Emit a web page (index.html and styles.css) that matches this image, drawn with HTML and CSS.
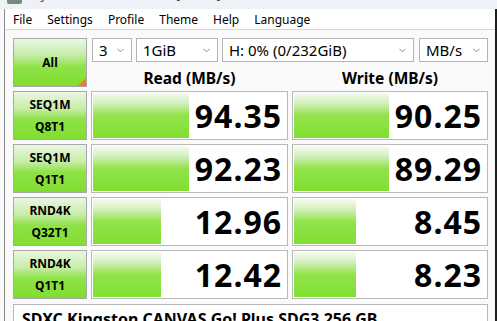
FILE: index.html
```html
<!DOCTYPE html>
<html lang="en">
<head>
    <meta charset="UTF-8">
    <title>CrystalDiskMark</title>
    <link rel="stylesheet" href="styles.css">
</head>
<body>
    <div class="titlebar">
        <span class="app-icon"></span>
        <span class="title-text">CrystalDiskMark 8.0.4 x64 [Admin]</span>
        <span class="title-ctrl">&mdash;</span>
        <span class="title-ctrl">&#9633;</span>
        <span class="title-ctrl">&#10005;</span>
    </div>
    <div class="window">
        <nav class="menubar">
            <span>File</span>
            <span>Settings</span>
            <span>Profile</span>
            <span>Theme</span>
            <span>Help</span>
            <span>Language</span>
        </nav>

        <main class="panel">
            <button class="all-btn">All</button>

            <div class="selects">
                <div class="select sel-count">3<svg class="chev" viewBox="0 0 8 5"><polyline points="0.5,0.5 4,4 7.5,0.5"/></svg></div>
                <div class="select sel-size">1GiB<svg class="chev" viewBox="0 0 8 5"><polyline points="0.5,0.5 4,4 7.5,0.5"/></svg></div>
                <div class="select sel-drive">H: 0% (0/232GiB)<svg class="chev" viewBox="0 0 8 5"><polyline points="0.5,0.5 4,4 7.5,0.5"/></svg></div>
                <div class="select sel-unit">MB/s<svg class="chev" viewBox="0 0 8 5"><polyline points="0.5,0.5 4,4 7.5,0.5"/></svg></div>
            </div>

            <div class="col-head">Read (MB/s)</div>
            <div class="col-head">Write (MB/s)</div>

            <div class="test-btn">SEQ1M<br>Q8T1</div>
            <div class="result"><div class="bar" style="width: 49%"></div><span class="value">94.35</span></div>
            <div class="result"><div class="bar" style="width: 49%"></div><span class="value">90.25</span></div>

            <div class="test-btn">SEQ1M<br>Q1T1</div>
            <div class="result"><div class="bar" style="width: 49%"></div><span class="value">92.23</span></div>
            <div class="result"><div class="bar" style="width: 49%"></div><span class="value">89.29</span></div>

            <div class="test-btn">RND4K<br>Q32T1</div>
            <div class="result"><div class="bar" style="width: 35%"></div><span class="value">12.96</span></div>
            <div class="result"><div class="bar" style="width: 32%"></div><span class="value">8.45</span></div>

            <div class="test-btn">RND4K<br>Q1T1</div>
            <div class="result"><div class="bar" style="width: 35%"></div><span class="value">12.42</span></div>
            <div class="result"><div class="bar" style="width: 32%"></div><span class="value">8.23</span></div>

            <div class="comment">SDXC Kingston CANVAS Go! Plus SDG3 256 GB</div>
        </main>
    </div>
</body>
</html>
```

FILE: styles.css
```css
body {
    margin: 0;
    height: 321px;
    font-family: 'Noto Sans', 'Open Sans', sans-serif;
    background: #fafafa;
    color: #000;
    overflow: hidden;
}

/* Заголовок вікна: у кадрі лише його низ */
.titlebar {
    height: 9px;
    background-color: #eef1f6;
    display: flex;
    align-items: flex-start;
    overflow: hidden;
    font-size: 12px;
    color: #444;
}

.app-icon {
    width: 15px;
    height: 4px;
    margin: 0 0 0 7px;
    background: #7b877b;
    border-radius: 0 0 2px 2px;
}

.title-text {
    margin: -12px 0 0 6px;
    line-height: 14px;
    flex: 1;
}

.title-ctrl {
    width: 46px;
    text-align: center;
    line-height: 14px;
    margin-top: -12px;
    color: #999;
}

.window {
    margin-left: 4px;
    border-left: 1px solid #8a8a8a;
    border-right: 2px solid #1e1e1e;
    height: 312px;
    overflow: hidden;
}

.menubar {
    height: 20px;
    background: #ffffff;
    border-bottom: 1px solid #d7d7d7;
    display: flex;
    align-items: center;
    font-size: 12px;
    padding-left: 8px;
}

.menubar span {
    margin-right: 15px;
}

.panel {
    display: grid;
    grid-template-columns: 74px 197px 196px;
    grid-template-rows: 24px 21px repeat(4, 49px) auto;
    column-gap: 4px;
    row-gap: 4px;
    padding: 8px 0 0 8px;
}

.all-btn {
    grid-row: 1 / 3;
    position: relative;
    border: 1px solid #a8a8a8;
    background: linear-gradient(to bottom, #eaf6e2 0%, #c4eca6 35%, #8ee246 60%, #7fdd2e 100%);
    font-family: inherit;
    font-weight: bold;
    font-size: 12px;
    padding: 0;
    margin: 0;
}

.all-btn::after {
    content: '';
    position: absolute;
    right: 0;
    bottom: 0;
    border-left: 8px solid transparent;
    border-bottom: 8px solid #ee7d1c;
}

.selects {
    grid-column: 2 / 4;
    display: flex;
    gap: 4px;
    margin-left: 1px;
}

.select {
    position: relative;
    height: 24px;
    box-sizing: border-box;
    border: 1px solid #b4b4b4;
    background: #ffffff;
    font-size: 15px;
    line-height: 22px;
    padding-left: 6px;
}

.sel-count { width: 40px; }
.sel-size { width: 82px; }
.sel-drive { width: 192px; }
.sel-unit { width: 69px; margin-left: 1px; }

.chev {
    position: absolute;
    right: 7px;
    top: 9px;
    width: 7px;
    height: 5px;
    fill: none;
    stroke: #7a7a7a;
    stroke-width: 1;
}

.col-head {
    font-weight: bold;
    font-size: 15.5px;
    text-align: center;
    line-height: 21px;
    margin-top: 2px;
}

.test-btn {
    border: 1px solid #a8a8a8;
    background: linear-gradient(to bottom, #eaf6e2 0%, #c8eda9 35%, #8ee246 58%, #80de30 100%);
    font-weight: bold;
    font-size: 12px;
    line-height: 22px;
    text-align: center;
    display: flex;
    align-items: center;
    justify-content: center;
}

.result {
    position: relative;
    border: 1px solid #b9b9b9;
    background: #ffffff;
    display: flex;
    align-items: center;
    justify-content: flex-end;
    overflow: hidden;
}

.bar {
    position: absolute;
    left: 1px;
    top: 1px;
    bottom: 1px;
    background: linear-gradient(to bottom, #f6fbf2 0%, #d4f0bf 22%, #92e34c 50%, #80df31 100%);
}

.value {
    position: relative;
    font-weight: bold;
    font-size: 32px;
    letter-spacing: 1px;
    padding-right: 5px;
    line-height: 1;
}

.comment {
    grid-column: 1 / 4;
    margin-top: 1px;
    height: 30px;
    border: 1px solid #b9b9b9;
    background: #ffffff;
    font-weight: bold;
    font-size: 16px;
    padding: 3px 0 0 8px;
}
```
